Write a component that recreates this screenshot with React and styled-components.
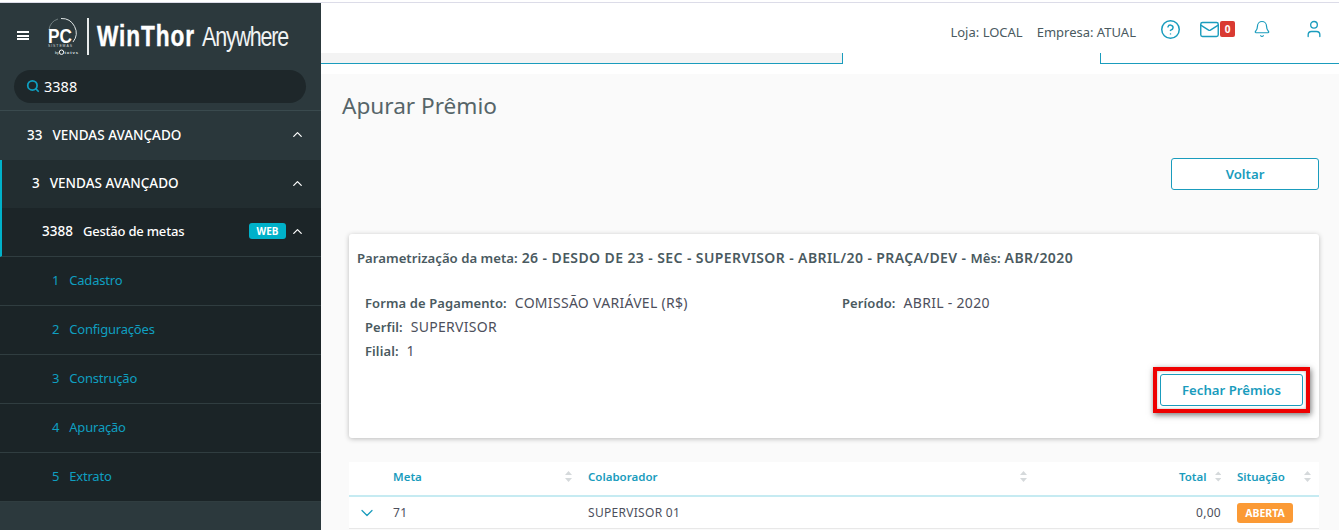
import React from 'react';
import styled, { createGlobalStyle } from 'styled-components';
import { Search, CircleHelp, Mail, Bell, User, ChevronUp, ChevronDown } from 'lucide-react';

const teal = '#1a9cbd';
const slate = '#4a5a5f';

const GlobalStyle = createGlobalStyle`
  html, body { margin: 0; padding: 0; background: #fff; }
  body { font-family: 'Noto Sans', 'Open Sans', sans-serif; color: #4b5a5e; }
  * { box-sizing: border-box; }
`;

const Page = styled.div`
  width: 1339px;
  height: 530px;
  overflow: hidden;
  display: flex;
  padding-top: 3px;
  position: relative;
  background: #fff;
  &:before {
    content: '';
    position: absolute;
    top: 2px;
    left: 0;
    right: 0;
    height: 1px;
    background: #dcdce8;
  }
`;

const Sidebar = styled.aside`
  width: 321px;
  flex: none;
  background: #2c393d;
  display: flex;
  flex-direction: column;
  color: #fff;
`;

const Brand = styled.div`
  height: 63px;
  display: flex;
  align-items: center;
  padding: 4px 0 0 17px;
`;

const Burger = styled.div`
  width: 12px;
  height: 9px;
  flex: none;
  border-top: 2px solid #fff;
  border-bottom: 2px solid #fff;
  position: relative;
  margin: -2px 18px 0 0;
  &:after {
    content: '';
    position: absolute;
    left: 0;
    right: 0;
    top: 1.5px;
    height: 2px;
    background: #fff;
  }
`;

const LogoMark = styled.svg`
  width: 40px;
  height: 40px;
  flex: none;
`;

const LogoRule = styled.div`
  width: 2px;
  height: 37px;
  flex: none;
  background: #e8ecec;
  margin-right: 8px;
`;

const LogoText = styled.div`
  flex: none;
  font-family: 'Liberation Sans', sans-serif;
  font-size: 29px;
  white-space: nowrap;
  transform: scaleX(0.78);
  transform-origin: left center;
  color: #f0f3f3;
  b { font-weight: 700; letter-spacing: 1.2px; margin-right: 9px; color: #fff; -webkit-text-stroke: 0.4px #fff; }
  span { font-weight: 400; font-size: 27.5px; letter-spacing: -1.5px; }
`;

const SearchWrap = styled.div`
  padding: 4px 15px 0 14px;
  height: 45px;
  border-bottom: 1px solid #3a4a4e;
`;

const SearchBox = styled.div`
  height: 33px;
  border-radius: 17px;
  background: #1e272a;
  display: flex;
  align-items: center;
  gap: 4px;
  padding: 0 0 2px 12px;
  font-size: 14.5px;
  color: #fff;
`;

const GroupRow = styled.div`
  height: ${p => p.$h || 49}px;
  flex: none;
  display: flex;
  align-items: center;
  font-size: 13.5px;
  font-weight: 500;
  background: ${p => p.$bg};
  padding: 0 16px 2px ${p => p.$pad}px;
  gap: ${p => p.$gap || 10}px;
  border-left: ${p => (p.$active ? '2px solid #00b1c9' : 'none')};
  border-bottom: ${p => (p.$line ? '1px solid #303d40' : 'none')};
`;

const RowLabel = styled.span`
  flex: 1;
  white-space: nowrap;
  font-size: ${p => p.$fs || 13.5}px;
  letter-spacing: ${p => p.$ls || 0}px;
`;

const WebBadge = styled.span`
  width: 37px;
  height: 16px;
  border-radius: 3px;
  background: #00b1c9;
  color: #fff;
  font-size: 10px;
  font-weight: 700;
  display: flex;
  align-items: center;
  justify-content: center;
  margin-right: -6px;
`;

const SubRow = styled.div`
  height: 49px;
  flex: none;
  display: flex;
  align-items: center;
  gap: 10px;
  padding: 0 0 2px 52px;
  font-size: 13px;
  letter-spacing: -0.2px;
  color: #0f9fc0;
  background: #1b2427;
  border-bottom: 1px solid #303d40;
  &:last-of-type { border-bottom: 0; }
`;

const SideFiller = styled.div`
  flex: 1;
  background: #2c393d;
`;

const Main = styled.main`
  flex: 1;
  min-width: 0;
  display: flex;
  flex-direction: column;
`;

const Topbar = styled.header`
  height: 50px;
  flex: none;
  display: flex;
  justify-content: flex-end;
  align-items: center;
  padding: 8px 15px 0 0;
  font-size: 13px;
  color: ${slate};
`;

const StoreLabel = styled.span`
  margin-right: 14px;
  white-space: nowrap;
`;

const IconBtn = styled.span`
  display: flex;
  align-items: center;
  color: ${teal};
  margin-left: ${p => p.$ml}px;
  margin-top: -6px;
`;

const CountBadge = styled.span`
  width: 15px;
  height: 16px;
  border-radius: 2px;
  background: #d93a32;
  color: #fff;
  font-size: 10px;
  font-weight: 700;
  display: flex;
  align-items: center;
  justify-content: center;
`;

const TabStrip = styled.div`
  height: 11px;
  flex: none;
  display: flex;
`;

const TabFiller = styled.div`
  flex: ${p => (p.$grow ? 1 : 'none')};
  width: ${p => p.$w}px;
  background: ${p => p.$bg};
  border-bottom: 1px solid ${teal};
  border-right: ${p => (p.$right ? `1px solid ${teal}` : 'none')};
  border-left: ${p => (p.$left ? `1px solid ${teal}` : 'none')};
`;

const TabOpen = styled.div`
  width: 257px;
  flex: none;
`;

const Content = styled.div`
  flex: 1;
  margin-top: 10px;
  background: #fafafa;
  padding: 0 20px 0 21px;
  display: flex;
  flex-direction: column;
`;

const Title = styled.h1`
  margin: 15px 0 0;
  font-size: 22.6px;
  line-height: 34px;
  font-weight: 400;
  color: #566569;
`;

const BackRow = styled.div`
  display: flex;
  justify-content: flex-end;
  margin-top: 35px;
`;

const OutlineBtn = styled.button`
  width: ${p => p.$w}px;
  height: 32px;
  background: #fff;
  border: 1px solid ${teal};
  border-radius: 3px;
  color: ${teal};
  font-family: inherit;
  font-size: 13.2px;
  font-weight: 600;
  padding: 0;
`;

const Card = styled.section`
  margin: 44px 0 0 7px;
  height: 204px;
  background: #fff;
  border-radius: 3px;
  box-shadow: 0 1px 5px rgba(0, 0, 0, 0.25);
  padding: 15px 8px 0;
  display: flex;
  flex-direction: column;
`;

const CardTitle = styled.div`
  font-size: 14px;
  line-height: 18px;
  font-weight: 600;
  letter-spacing: 0.4px;
  color: ${slate};
  white-space: nowrap;
  span { font-size: 13.2px; letter-spacing: 0; }
`;

const InfoGrid = styled.div`
  display: grid;
  grid-template-columns: 477px 1fr;
  margin: 24px 0 0 8px;
  font-size: 14px;
  line-height: 24px;
  letter-spacing: 0.3px;
  color: #4d4f5c;
`;

const InfoLine = styled.div`
  grid-column: ${p => p.$col || 1};
  white-space: nowrap;
  b { font-size: 13px; letter-spacing: 0.1px; font-weight: 600; color: ${slate}; margin-right: 8px; }
`;

const CardActions = styled.div`
  display: flex;
  justify-content: flex-end;
  margin: 4px 1px 0 0;
`;

const Highlight = styled.div`
  border: 4px solid #ee0000;
  padding: 3px;
  box-shadow: 1px 2px 6px rgba(0, 0, 0, 0.55), inset 0 0 3px rgba(0, 0, 0, 0.3);
  display: flex;
`;

const Table = styled.div`
  margin: 24px 0 0 7px;
  background: #fff;
`;

const TableRow = styled.div`
  display: grid;
  grid-template-columns: 44px 195px 1fr 58px 82px;
  align-items: center;
  height: ${p => p.$h}px;
  padding-bottom: ${p => p.$pb || 0}px;
  border-bottom: ${p => p.$border};
  font-size: ${p => p.$fs}px;
  color: ${p => p.$color};
  font-weight: ${p => p.$fw};
  letter-spacing: ${p => p.$ls || 0}px;
`;

const Cell = styled.div`
  display: flex;
  align-items: center;
  justify-content: ${p => (p.$end ? 'flex-end' : 'space-between')};
  gap: ${p => p.$gap || 0}px;
  padding-right: ${p => p.$pr || 0}px;
  white-space: nowrap;
`;

const StatusTag = styled.span`
  background: #fb9a35;
  color: #fff;
  width: 56px;
  height: 20px;
  border-radius: 3px;
  font-size: 10.5px;
  font-weight: 700;
  letter-spacing: 0;
  display: flex;
  align-items: center;
  justify-content: center;
`;

const SortIcon = () => (
  <svg width="7" height="11" viewBox="0 0 7 11" fill="#d5d9db">
    <path d="M3.5 0 7 4H0zM3.5 11 0 7h7z" />
  </svg>
);

const Logo = () => (
  <LogoMark viewBox="0 0 40 40">
    <path d="M14 1.5A14.5 14.5 0 0 1 26 25" fill="none" stroke="#dfe5e5" strokeWidth="1" />
    <path d="M2 13A13 13 0 0 1 11 2" fill="none" stroke="#8d9a9b" strokeWidth="0.7" />
    <text x="1" y="26" fontFamily="Liberation Sans" fontWeight="700" fontSize="21" fill="#fff" textLength="24" lengthAdjust="spacingAndGlyphs">PC</text>
    <text x="1" y="30" fontFamily="Liberation Sans" fontSize="3.5" fill="#cfd6d6" textLength="24">SISTEMAS</text>
    <text x="8" y="36.5" fontFamily="Liberation Sans" fontSize="3.6" fill="#dfe5e5">by</text>
    <circle cx="14.5" cy="35.2" r="2.2" fill="none" stroke="#fff" strokeWidth="1" />
    <text x="17.5" y="36.5" fontFamily="Liberation Sans" fontWeight="700" fontSize="4.2" fill="#dfe5e5" textLength="13.5">totvs</text>
  </LogoMark>
);

const subItems = ['Cadastro', 'Configurações', 'Construção', 'Apuração', 'Extrato'];

export default function App() {
  return (
    <>
      <GlobalStyle />
      <Page>
        <Sidebar>
          <Brand>
            <Burger />
            <Logo />
            <LogoRule />
            <LogoText><b>WinThor</b><span>Anywhere</span></LogoText>
          </Brand>
          <SearchWrap>
            <SearchBox>
              <Search size={14} color="#0f9fc0" strokeWidth={3} />
              3388
            </SearchBox>
          </SearchWrap>
          <GroupRow $bg="#2a373b" $pad={27}>
            33
            <RowLabel>VENDAS AVANÇADO</RowLabel>
            <ChevronUp size={15} strokeWidth={2} />
          </GroupRow>
          <GroupRow $bg="#222d30" $pad={30} $active $h={48}>
            3
            <RowLabel>VENDAS AVANÇADO</RowLabel>
            <ChevronUp size={15} strokeWidth={2} />
          </GroupRow>
          <GroupRow $bg="#1c2528" $pad={40} $active $line>
            3388
            <RowLabel $fs={13} $ls={-0.2}>Gestão de metas</RowLabel>
            <WebBadge>WEB</WebBadge>
            <ChevronUp size={15} strokeWidth={2} />
          </GroupRow>
          {subItems.map((item, i) => (
            <SubRow key={item}>
              <span>{i + 1}</span>
              <span>{item}</span>
            </SubRow>
          ))}
          <SideFiller />
        </Sidebar>
        <Main>
          <Topbar>
            <StoreLabel>Loja: LOCAL</StoreLabel>
            <StoreLabel>Empresa: ATUAL</StoreLabel>
            <IconBtn $ml={10}><CircleHelp size={21} strokeWidth={1.7} /></IconBtn>
            <IconBtn $ml={18}><Mail size={21} strokeWidth={1.6} /><CountBadge>0</CountBadge></IconBtn>
            <IconBtn $ml={18}><Bell size={18} strokeWidth={1.6} /></IconBtn>
            <IconBtn $ml={33}><User size={20} strokeWidth={1.6} /></IconBtn>
          </Topbar>
          <TabStrip>
            <TabFiller $w={522} $bg="#f3f3f3" $right />
            <TabOpen />
            <TabFiller $grow $bg="#fff" $left />
          </TabStrip>
          <Content>
            <Title>Apurar Prêmio</Title>
            <BackRow><OutlineBtn $w={148}>Voltar</OutlineBtn></BackRow>
            <Card>
              <CardTitle><span>Parametrização da meta:</span> 26 - DESDO DE 23 - SEC - SUPERVISOR - ABRIL/20 - PRAÇA/DEV - <span>Mês:</span> ABR/2020</CardTitle>
              <InfoGrid>
                <InfoLine><b>Forma de Pagamento:</b>COMISSÃO VARIÁVEL (R$)</InfoLine>
                <InfoLine $col={2}><b>Período:</b>ABRIL - 2020</InfoLine>
                <InfoLine><b>Perfil:</b>SUPERVISOR</InfoLine>
                <InfoLine><b>Filial:</b>1</InfoLine>
              </InfoGrid>
              <CardActions>
                <Highlight><OutlineBtn $w={143}>Fechar Prêmios</OutlineBtn></Highlight>
              </CardActions>
            </Card>
            <Table>
              <TableRow $h={35} $pb={4} $border="2px solid #c6ebf2" $fs={11.5} $color={teal} $fw={600}>
                <span />
                <Cell $pr={16}>Meta<SortIcon /></Cell>
                <Cell $pr={152}>Colaborador<SortIcon /></Cell>
                <Cell $end $gap={8} $pr={16}>Total<SortIcon /></Cell>
                <Cell $pr={8}>Situação<SortIcon /></Cell>
              </TableRow>
              <TableRow $h={32} $border="1px solid #e8e8e8" $fs={12} $ls={0.3} $color="#4d4f5c" $fw={400}>
                <Cell $end $pr={16}><ChevronDown size={20} color={teal} strokeWidth={1.5} /></Cell>
                <Cell>71</Cell>
                <Cell>SUPERVISOR 01</Cell>
                <Cell $end $pr={16}>0,00</Cell>
                <Cell><StatusTag>ABERTA</StatusTag></Cell>
              </TableRow>
            </Table>
          </Content>
        </Main>
      </Page>
    </>
  );
}
